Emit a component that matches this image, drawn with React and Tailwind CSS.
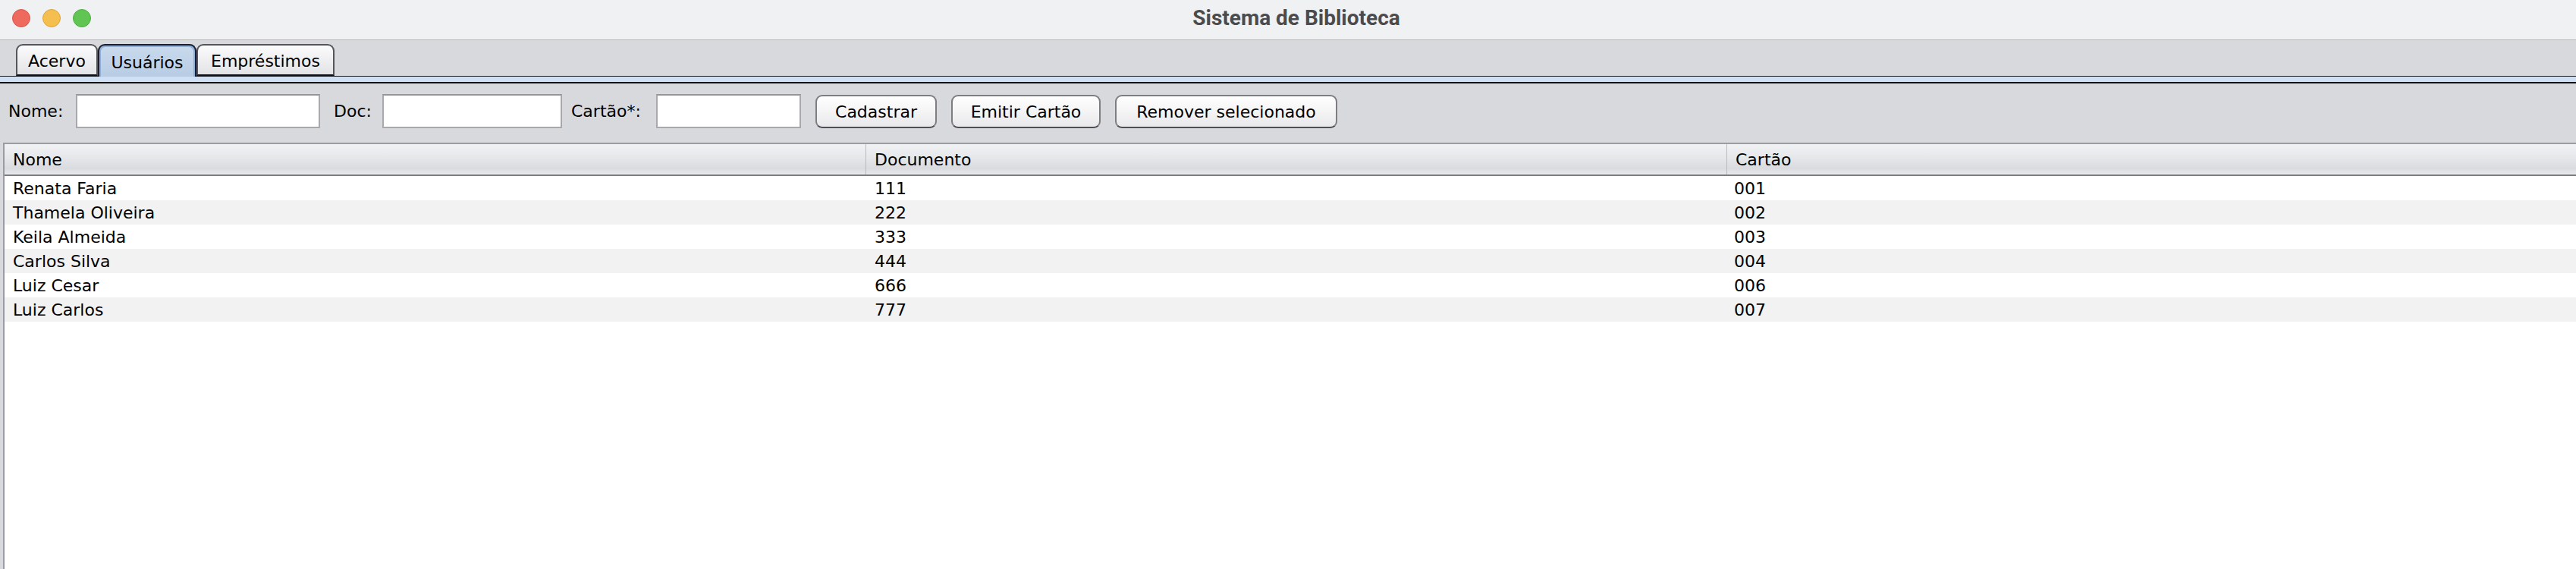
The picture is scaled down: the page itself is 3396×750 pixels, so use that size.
import React from "react";

const USERS = [
  { nome: "Renata Faria", doc: "111", cartao: "001" },
  { nome: "Thamela Oliveira", doc: "222", cartao: "002" },
  { nome: "Keila Almeida", doc: "333", cartao: "003" },
  { nome: "Carlos Silva", doc: "444", cartao: "004" },
  { nome: "Luiz Cesar", doc: "666", cartao: "006" },
  { nome: "Luiz Carlos", doc: "777", cartao: "007" }
];

export default function App() {
  return (
    <div className="w-[3396px] h-[750px] overflow-hidden bg-[#d8d9dd] text-black font-['DejaVu_Sans',sans-serif]">
      <TitleBar />

      {/* ===== TABS ===== */}
      <div className="h-[47px] flex items-end pl-[21px]">
        <Tab label="Acervo" width="w-[108px]" />
        <Tab label="Usuários" width="w-[130px]" selected />
        <Tab label="Empréstimos" width="w-[182px]" />
      </div>
      <div className="h-px bg-[#1d1d24]" />
      <div className="h-[7px] bg-[#cfe0f4]" />
      <div className="h-[2px] bg-[#0d0d16]" />

      {/* ===== FORM ===== */}
      <div className="h-[78px] flex items-start pt-[14px] pl-[11px] text-[22px]">
        <span className="w-[89px] h-[45px] flex items-center">Nome:</span>
        <Field width="w-[322px]" />
        <span className="ml-[18px] w-[64px] h-[45px] flex items-center">Doc:</span>
        <Field width="w-[237px]" />
        <span className="ml-[12px] w-[112px] h-[45px] flex items-center">Cartão*:</span>
        <Field width="w-[191px]" />
        <Button label="Cadastrar" width="w-[160px]" />
        <Button label="Emitir Cartão" width="w-[197px]" />
        <Button label="Remover selecionado" width="w-[293px]" />
      </div>

      {/* ===== TABLE ===== */}
      <div className="ml-[4px] h-[562px] bg-white border-l-2 border-[#9a9ba4]">
        <div className="border-t-2 border-b-2 border-t-[#9c9da3] border-b-[#7c7d83] h-[44px] flex text-[22px] bg-[linear-gradient(#f1f2f4,#e6e7ea_45%,#dadbdf_80%,#e9eaed)]">
          <HeaderCell label="Nome" width="w-[1135px]" />
          <HeaderCell label="Documento" width="w-[1135px]" border />
          <HeaderCell label="Cartão" width="flex-1" border />
        </div>
        {USERS.map((u, i) => (
          <div
            key={u.cartao}
            className={`h-[32px] flex items-center text-[22px] ${i % 2 ? "bg-[#f2f2f2]" : "bg-white"}`}
          >
            <div className="w-[1135px] pl-[11px]">{u.nome}</div>
            <div className="w-[1135px] pl-[12px]">{u.doc}</div>
            <div className="flex-1 pl-[10px]">{u.cartao}</div>
          </div>
        ))}
      </div>
    </div>
  );
}

function TitleBar() {
  return (
    <div className="relative h-[53px] bg-[#f0f1f3] border-b border-[#b6b6b9] flex items-center">
      <div className="flex gap-[16px] pl-[16px] pb-[4px]">
        <span className="w-[24px] h-[24px] rounded-full bg-[#ee6a5f] border border-[#d9564b]" />
        <span className="w-[24px] h-[24px] rounded-full bg-[#f5bf4f] border border-[#dca53a]" />
        <span className="w-[24px] h-[24px] rounded-full bg-[#61c554] border border-[#4fae43]" />
      </div>
      <div className="absolute left-0 right-0 top-0 h-[52px] flex items-center justify-center pl-[22px] pb-[4px] text-[28px] font-bold text-[#4b4b4d] font-['Roboto',sans-serif]">
        Sistema de Biblioteca
      </div>
    </div>
  );
}

function Tab({ label, width, selected }) {
  if (selected) {
    return (
      <div className={`${width} h-[43px] -mb-px rounded-t-[9px] border-2 border-b-0 border-[#1b1c2e] p-[2px] pb-0 bg-[#8fb1d9]`}>
        <div className="h-full rounded-t-[6px] bg-[linear-gradient(#c8d9ec,#b7cce4)] flex items-center justify-center text-[22px] pt-[2px]">
          {label}
        </div>
      </div>
    );
  }
  return (
    <div
      className={`${width} h-[42px] rounded-t-[9px] border-2 border-[#55565c] border-b-[#111118] bg-[linear-gradient(#fbfbfc,#eeeef0_55%,#e2e3e6)] flex items-center justify-center text-[22px] pt-[2px]`}
    >
      {label}
    </div>
  );
}

function Field({ width }) {
  return (
    <div className={`${width} h-[45px] bg-white border-2 border-[#a9a9ad] border-t-[#96969a]`} />
  );
}

function Button({ label, width }) {
  return (
    <div
      className={`${width} ml-[19px] mt-px h-[44px] rounded-[9px] border-2 border-[#7d7d82] border-b-[#4e4e53] bg-[linear-gradient(#ffffff,#f4f4f5_50%,#e9e9eb)] flex items-center justify-center text-[22px]`}
    >
      {label}
    </div>
  );
}

function HeaderCell({ label, width, border }) {
  return (
    <div
      className={`${width} h-full flex items-center pl-[11px] ${border ? "border-l border-[#b9babf]" : ""}`}
    >
      {label}
    </div>
  );
}
